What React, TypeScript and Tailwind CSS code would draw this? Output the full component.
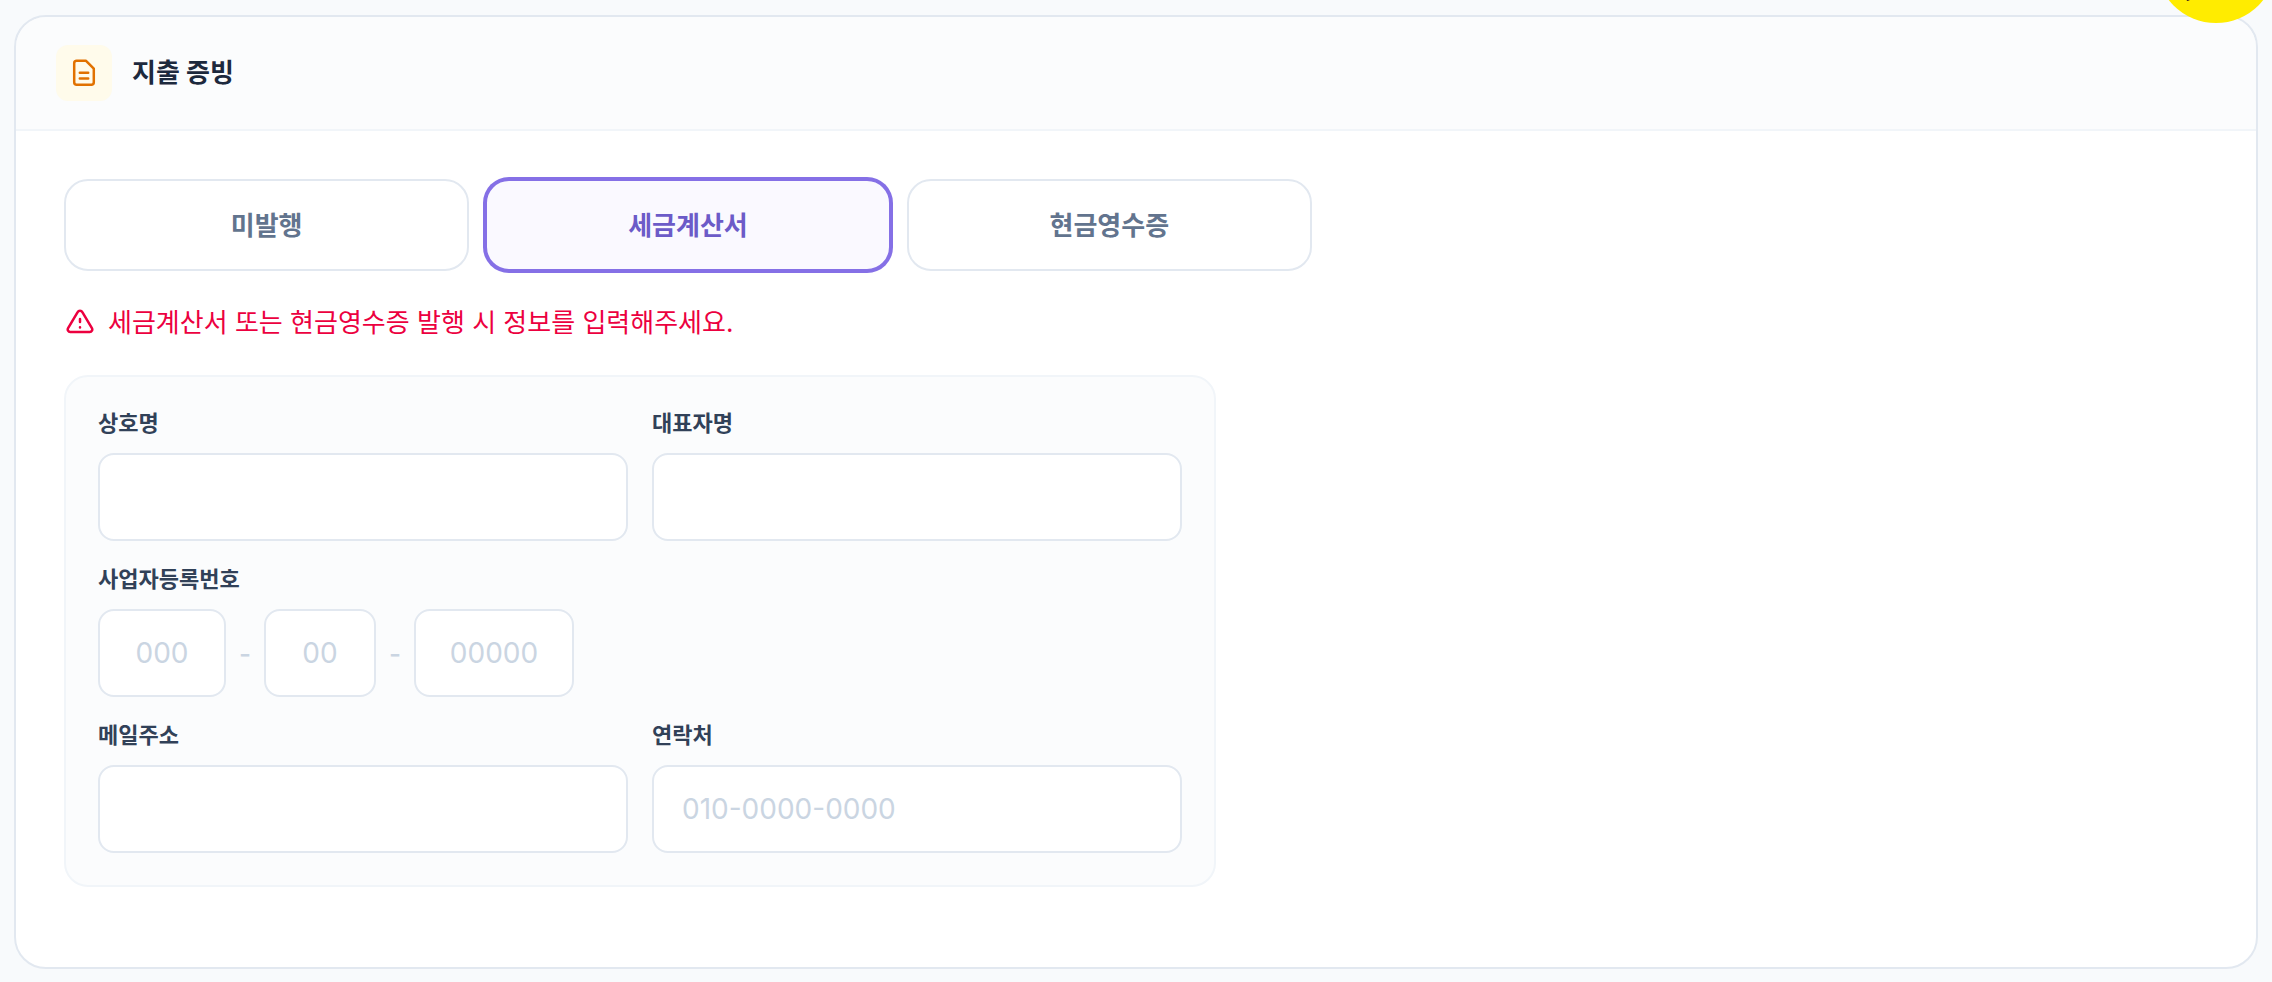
import { useState } from "react"
import type { InputHTMLAttributes } from "react"

const RECEIPT_TYPES = ["미발행", "세금계산서", "현금영수증"]

const inputClass =
  "h-22 rounded-2xl border-2 border-slate-200 bg-white text-[28px] text-slate-800 outline-none placeholder:text-slate-300"

const labelClass = "text-[22px] leading-7 font-bold text-slate-700"

function DocumentIcon() {
  return (
    <svg viewBox="0 0 28 28" className="h-7 w-7" fill="none" stroke="currentColor" strokeWidth={2.5} strokeLinecap="round" strokeLinejoin="round" aria-hidden="true">
      <path d="M6.700 1.700H15.800L23.800 9.700V23.300a2.500 2.500 0 0 1-2.500 2.500H6.700a2.500 2.500 0 0 1-2.500-2.500V4.200a2.500 2.500 0 0 1 2.500-2.500Z" />
      <path d="M9.800 13.800h8.400M9.800 19.500h8.400" />
    </svg>
  )
}

function WarningIcon() {
  return (
    <svg viewBox="0 0 28 28" className="h-7 w-7 shrink-0" fill="none" stroke="currentColor" strokeWidth={2.5} strokeLinecap="round" strokeLinejoin="round" aria-hidden="true">
      <path d="M11.500 3.300 2.100 19.200A2.500 2.500 0 0 0 4.200 23h19.600a2.500 2.500 0 0 0 2.100-3.800L16.500 3.300a2.900 2.900 0 0 0-5 0Z" />
      <path d="M14 10v3M14 18.300v.1" />
    </svg>
  )
}

interface FieldProps extends InputHTMLAttributes<HTMLInputElement> {
  id: string
  label: string
}

function Field({ id, label, ...rest }: FieldProps) {
  return (
    <div className="flex min-w-0 flex-col gap-4">
      <label htmlFor={id} className={labelClass}>
        {label}
      </label>
      <input id={id} className={`${inputClass} w-full px-7`} {...rest} />
    </div>
  )
}

export default function App() {
  const [selected, setSelected] = useState("세금계산서")

  return (
    <div className="relative min-h-screen overflow-hidden bg-slate-50 px-3.5 pt-[15px] pb-3 font-['Inter','Noto_Sans_CJK_KR',sans-serif]">
      <section className="overflow-hidden rounded-[32px] border-2 border-slate-200 bg-white">
        <header className="flex items-center gap-5 border-b-2 border-slate-100 bg-slate-50/50 px-10 py-7">
          <span className="flex h-14 w-14 items-center justify-center rounded-xl bg-amber-50 text-[#e17100]">
            <DocumentIcon />
          </span>
          <h2 className="text-[26px] leading-10 font-bold text-slate-800">지출 증빙</h2>
        </header>

        <div className="px-12 pt-12 pb-20">
          <div className="grid max-w-[1248px] grid-cols-3 gap-4">
            {RECEIPT_TYPES.map((type) => (
              <button
                key={type}
                type="button"
                aria-pressed={selected === type}
                onClick={() => setSelected(type)}
                className={
                  selected === type
                    ? "h-23 rounded-3xl border-2 border-[#8570e6] bg-[#faf9ff] text-[26px] font-bold text-[#6c5bc8] ring-2 ring-[#8570e6]"
                    : "h-23 rounded-3xl border-2 border-slate-200 bg-white text-[26px] font-bold text-slate-500"
                }
              >
                {type}
              </button>
            ))}
          </div>

          <p className="my-8 flex items-center gap-3.5 pl-0.5 text-[26px] leading-10 text-[#ec003f]">
            <WarningIcon />
            세금계산서 또는 현금영수증 발행 시 정보를 입력해주세요.
          </p>

          <div className="grid max-w-[1152px] grid-cols-2 gap-6 rounded-3xl border-2 border-slate-100 bg-slate-50/50 p-8">
            <Field id="company" label="상호명" />
            <Field id="owner" label="대표자명" />

            <fieldset className="col-span-2">
              <legend className={`${labelClass} mb-4`}>사업자등록번호</legend>
              <div className="flex items-center gap-3 text-[26px] font-medium text-slate-300">
                <input aria-label="사업자등록번호 앞자리" placeholder="000" className={`${inputClass} w-32 text-center font-normal`} />
                <span className="w-3.5 text-center">-</span>
                <input aria-label="사업자등록번호 가운데" placeholder="00" className={`${inputClass} w-28 text-center font-normal`} />
                <span className="w-3.5 text-center">-</span>
                <input aria-label="사업자등록번호 뒷자리" placeholder="00000" className={`${inputClass} w-40 text-center font-normal`} />
              </div>
            </fieldset>

            <Field id="email" label="메일주소" type="email" />
            <Field id="phone" label="연락처" type="tel" placeholder="010-0000-0000" />
          </div>
        </div>
      </section>

      {/* floating chat button, mostly above the fold */}
      <button type="button" aria-label="채팅 상담" className="absolute -top-[97px] -right-1 h-30 w-30 rounded-full bg-[#ffec00]">
        <svg viewBox="0 0 120 120" className="h-30 w-30" fill="#3c1e1e" aria-hidden="true">
          <path d="M60 26c-22 0-38 13-38 31 0 12 6 21 15 27l-6 11.500c-1 2 0 3 2 2L50 88c3 .6 6 1 10 1 22 0 38-14 38-32S82 26 60 26Z" />
        </svg>
      </button>
    </div>
  )
}
